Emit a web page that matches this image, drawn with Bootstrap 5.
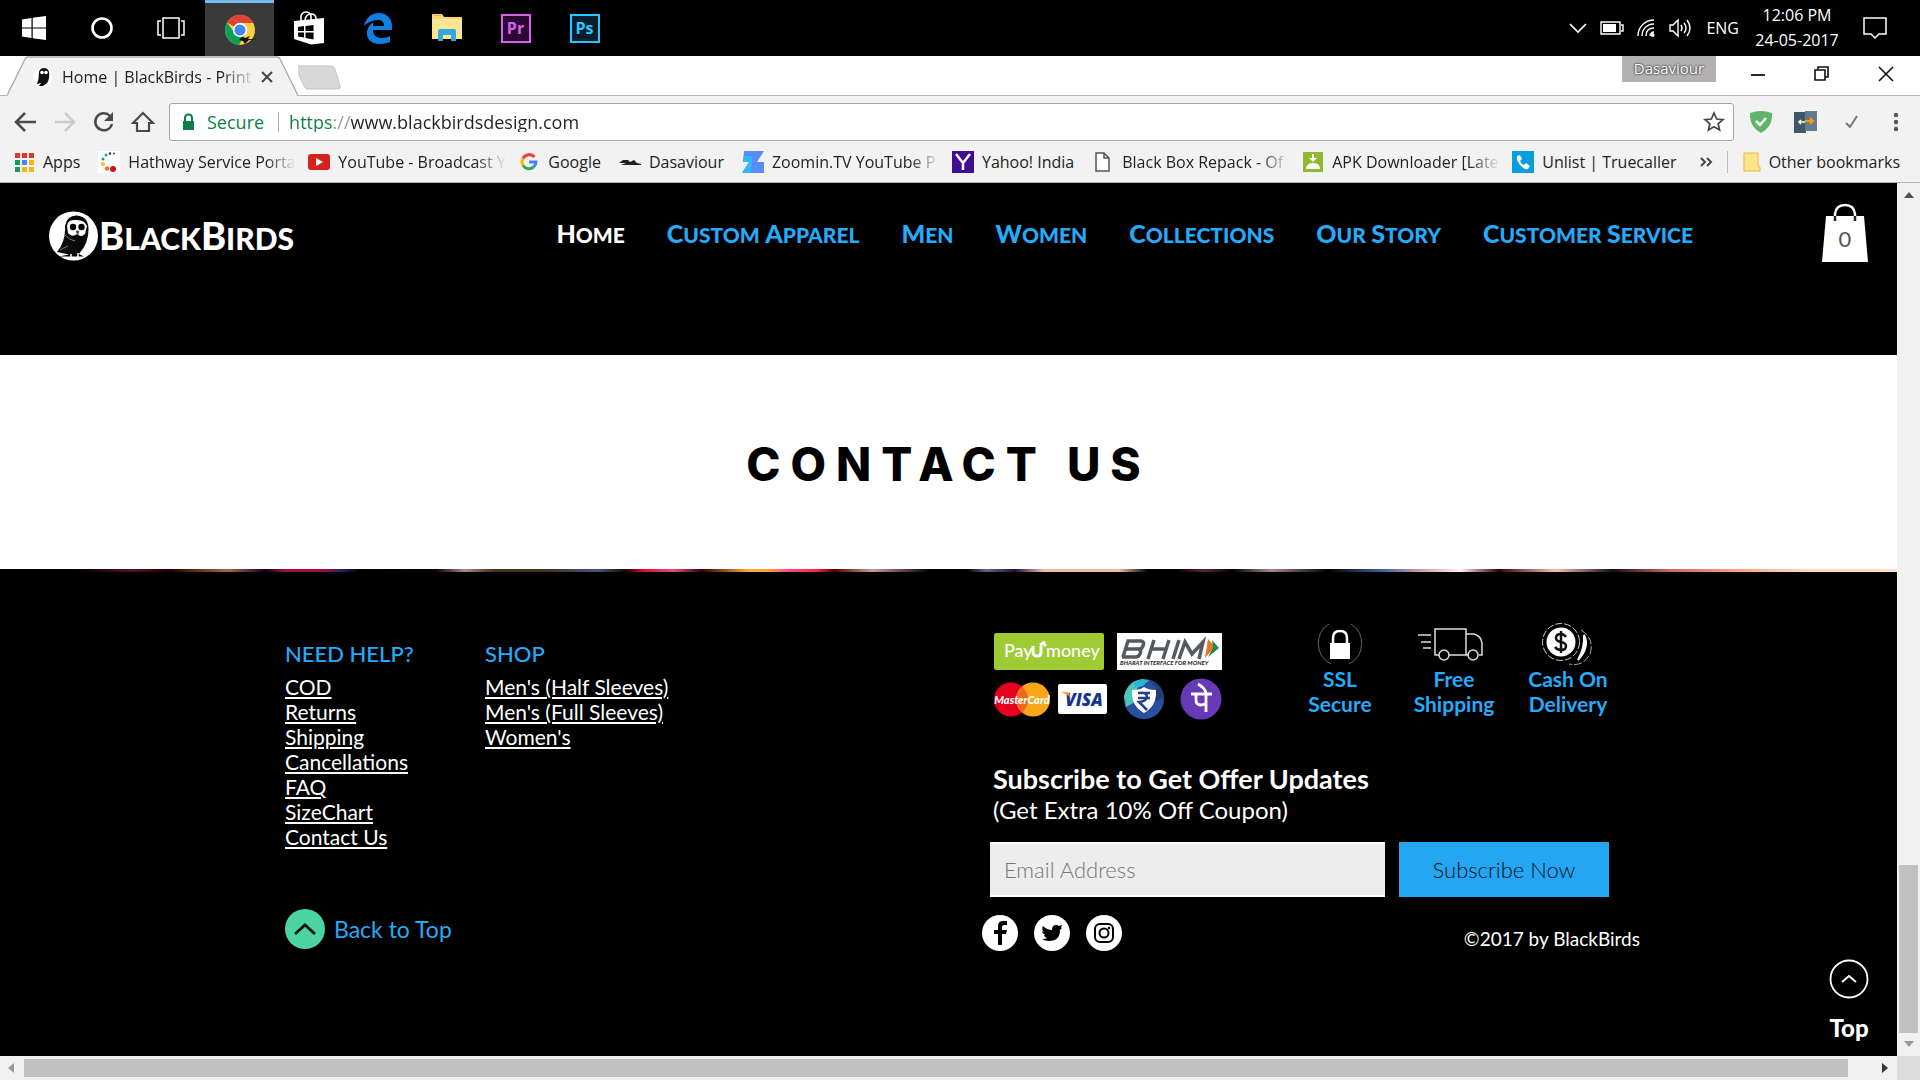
<!DOCTYPE html>
<html lang="en">
<head>
<meta charset="utf-8">
<meta name="viewport" content="width=device-width, initial-scale=1">
<title>Home | BlackBirds - Print</title>
<link rel="stylesheet" href="https://cdn.jsdelivr.net/npm/bootstrap@5.3.0/dist/css/bootstrap.min.css">
<style>
  :root { --sky: #24abfb; --chrome: #f2f2f2; }
  body { font-family: "Open Sans", "Noto Sans", sans-serif; font-size: 16px; line-height: 20px; color: #222; background: #000; }
  svg { display: block; flex: none; }
  button { border: 0; padding: 0; background: none; color: inherit; }

  /* taskbar */
  .taskbar { height: 56px; background: #000; color: #fff; }
  .task-tile { width: 69px; height: 56px; display: flex; align-items: center; justify-content: center; }
  .task-tile:first-child { width: 67px; }
  .task-tile.is-open { background: #3a3a3a; border-top: 3px solid #76b9ed; }
  .adobe { width: 30px; height: 29px; border: 2px solid; font: 700 16px/24px "Open Sans", sans-serif; text-align: center; }
  .adobe-pr { color: #d663e8; background: #2a0634; }
  .adobe-ps { color: #26c9ff; background: #0a1d2c; }
  .tray { gap: 12px; padding-right: 33px; }
  .tray-clock { line-height: 25px; text-align: center; width: 92px; }
  .tray-clock + button { margin-left: 8px; }

  /* browser frame */
  .tabstrip { height: 40px; background: #fff; border-bottom: 1px solid #b4b4b4; }
  .tab-active { width: 291px; height: 40px; margin-left: 7px; position: relative; }
  .tab-shape { position: absolute; left: 0; top: 0; }
  .tab-body { position: relative; padding: 2px 0 0 26px; height: 40px; }
  .tab-title { width: 194px; margin-left: 9px; }
  .fade-out { overflow: hidden; white-space: nowrap; -webkit-mask-image: linear-gradient(90deg, #000 82%, transparent); mask-image: linear-gradient(90deg, #000 82%, transparent); }
  .profile-tag { align-self: flex-start; width: 94px; height: 26px; background: #b1b1b1; color: #fff; font-size: 15px; line-height: 24px; text-shadow: 0 0 2px #333, 0 0 2px #333; text-align: center; margin-right: 10px; }
  .win-btn { width: 64px; height: 36px; display: flex; align-items: center; justify-content: center; }
  .win-btn:last-child { margin-right: 2px; }
  .toolbar { background: var(--chrome); padding: 7px 14px; }
  .nav-icons { gap: 16px; width: 155px; }
  .omnibox { height: 38px; background: #fff; border: 1px solid #a6a6a6; border-radius: 3px; padding: 0 8px 0 12px; font-size: 18px; }
  .secure { color: #0b8043; padding: 0 14px 0 12px; border-right: 1px solid #aaa; }
  .omnibox input { border: 0; outline: 0; padding: 0 0 0 10px; min-width: 0; color: #222;
    background: linear-gradient(90deg, #0b8043 55px, #999 55px, #999 72px, #222 72px); background-clip: text; -webkit-background-clip: text; -webkit-text-fill-color: transparent; }
  .extensions { gap: 22px; padding-left: 16px; }
  .bookmarks { background: var(--chrome); height: 35px; padding: 0 20px 6px 13px; border-bottom: 1px solid #b4b4b4; }
  .bookmarks a { color: #222; text-decoration: none; display: flex; align-items: center; gap: 8px; white-space: nowrap; }
  .bookmark-list { gap: 18px; }
  .bookmark-list .fade-out { width: 168px; margin-right: -6px; }
  .other-marks { border-left: 1px solid #bbb; padding-left: 15px; margin-left: 14px; height: 22px; }

  /* scroll bars of the viewport */
  .vbar { width: 23px; background: #f1f1f1; padding: 9px 2px; }
  .vbar i { display: block; width: 19px; height: 168px; background: #c1c1c1; margin-bottom: 8px; }
  .hbar { flex: none; height: 24px; background: #f1f1f1; padding-left: 8px; }
  .hbar i { height: 18px; background: #c1c1c1; margin: 0 34px 0 10px; }
  .hbar b { width: 23px; height: 24px; background: #dcdcdc; margin-left: 9px; }

  /* site */
  .site { font-family: Lato, "Open Sans", sans-serif; background: #000; position: relative; }
  .site-head { height: 172px; padding: 20px 29px 0 49px; }
  .caps { display: inline-block; text-transform: uppercase; font-weight: 900; }
  .brand-name { font-size: 30px; line-height: 40px; color: #fff; }
  .brand-name .caps::first-letter { font-size: 38px; }
  .site-nav { gap: 42px; margin-right: 129px; }
  .site-nav a { color: var(--sky); text-decoration: none; font-size: 21px; line-height: 28px; }
  .site-nav .caps::first-letter { font-size: 25px; }
  .site-nav a.active { color: #fff; }
  .bag { position: relative; color: #555; }
  .bag-count { position: absolute; left: 0; right: 0; top: 26px; text-align: center; font-size: 22px; }
  .contact-band { background: #fff; height: 214px; }
  .contact-band h1 { font-family: Inter, Lato, sans-serif; font-size: 46px; font-weight: 800; letter-spacing: 10px; color: #000; line-height: 58px; padding-top: 4px; }
  .photo-edge { height: 3px; background: linear-gradient(90deg, #000 0, #000 4%, #512 7%, #200 9%, #a64 12%, #102 14%, #a0103f 15%, #a0103f 17%, #226 18%, #000 19%, #100 23%, #a88 24.5%, #432 26%, #432 29%, #458 31.5%, #200 33%, #e01030 34%, #e05080 35.5%, #300 37%, #fa4 39.5%, #ff9f40 40.5%, #ff4f80 41.5%, #ff2050 43%, #500 44%, #c99 46%, #000 49%, #000 51%, #668 52%, #213 53.5%, #f0b8a8 55%, #f0b8a8 59%, #000 60.5%, #000 62%, #602040 63.5%, #000 65%, #a88 67%, #000 70%, #46a 73%, #d9a0a0 75%, #fff0ee 77%, #300 79%, #fbb 82%, #111 85%, #c66 88%, #fa8 92%, #ffd9b0 95%, #fdc 100%); }

  .site-foot { padding: 50px 257px 100px 285px; color: #fff; }
  .foot-left { padding-top: 19px; }
  .foot-title { font-size: 22px; line-height: 26px; font-weight: 500; color: var(--sky); margin: 0 0 7px; }
  .foot-links a { color: #fff; font-size: 21px; line-height: 25px; text-decoration: underline; }
  .help-col { width: 200px; }
  .foot-right { width: 650px; }
  .pay-grid { width: 232px; padding: 11px 0 0 4px; }
  .wallets { gap: 16px; padding-left: 17px; }
  .perk { width: 114px; text-align: center; color: var(--sky); font-weight: 700; font-size: 21px; line-height: 25px; }
  .perk svg { margin: 0 auto; }
  .perks { margin-right: 15px; }
  .offer { margin: 43px 0 0 3px; line-height: 31px; font-size: 24px; }
  .offer strong { font-size: 27px; display: block; }
  .mail-form { gap: 14px; margin-top: 17px; width: 619px; font-size: 22px; font-weight: 300; }
  .mail-form input { background: #ededed; border: 2px solid #fff; border-width: 2px 0; border-radius: 0; height: 55px; padding: 0 14px; min-width: 0; font-weight: 300; }
  .mail-form input::placeholder { color: #777; }
  .mail-form button { background: #24a6f2; color: #012; width: 210px; height: 55px; font-weight: 300; }
  .social { gap: 16px; margin: 18px 0 0 -8px; }
  .copyright { font-size: 19px; margin-top: 32px; }
  .back-top { color: var(--sky); font-size: 23px; text-decoration: none; gap: 9px; margin-top: 60px; }
  .float-top { position: absolute; right: 28px; bottom: 14px; color: #fff; text-decoration: none; font-weight: 900; font-size: 24px; line-height: 28px; text-align: center; }
  .float-top svg { margin: 0 auto 15px; }
</style>
<script src="https://cdn.jsdelivr.net/npm/bootstrap@5.3.0/dist/js/bootstrap.bundle.min.js"></script>
</head>
<body class="d-flex flex-column min-vh-100">

<div class="taskbar d-flex justify-content-between">
  <div class="d-flex">
    <button class="task-tile" aria-label="Start"><svg width="24" height="24" viewBox="0 0 24 24" fill="#fff"><path d="M0 3.500 9.500 2v9.500H0zM10.700 1.800 24 0v11.500H10.700zM0 12.600h9.500V22L0 20.600zM10.700 12.600H24V24l-13.300-1.800z"/></svg></button>
    <button class="task-tile" aria-label="Cortana"><svg width="24" height="24" viewBox="0 0 24 24"><circle cx="12" cy="12" r="9.500" fill="none" stroke="#fff" stroke-width="2.600"/></svg></button>
    <button class="task-tile" aria-label="Task view"><svg width="28" height="22" viewBox="0 0 28 22" fill="none" stroke="#fff" stroke-width="1.500"><path d="M6 1h16v20H6zM4 4H1v14h3M24 4h3v14h-3"/></svg></button>
    <button class="task-tile is-open" aria-label="Chrome"><svg width="34" height="32" viewBox="0 0 34 32"><circle cx="17" cy="16" r="15" fill="#ffcd40"/><path d="M17 16 4 8.500A15 15 0 0 1 30.500 9H17z" fill="#db4437"/><path d="M4 8.500A15 15 0 0 0 16 31l6-11-5-4-6 2z" fill="#0f9d58"/><circle cx="17" cy="16" r="7.200" fill="#fff"/><circle cx="17" cy="16" r="5.600" fill="#4285f4"/><path d="M16 26q3-5 6-2l5-2-2 3h9l-8 1-4 4-2-3z" fill="#111"/></svg></button>
    <button class="task-tile" aria-label="Store"><svg width="32" height="34" viewBox="0 0 32 34"><path d="M1 10 31 7v25l-13 1.500L1 28z" fill="#fff"/><path d="M8 10V5q1-4 5-4t5 4v4M12 9q1-6 6-6t5 5" fill="none" stroke="#fff" stroke-width="1.600"/><path d="M5 16l6-1v5H5zM12.500 15l8-1v6h-8zM5 21.500h6v5l-6-1zM12.500 21.500h8v7l-8-1.500z" fill="#000"/></svg></button>
    <button class="task-tile" aria-label="Edge"><svg width="30" height="32" viewBox="0 0 30 32"><path d="M1 14C3 5 9 1 16 1c8 0 13 6 13 13v4H10c0 6 4 8 9 8 3 0 6-1 8-2v6c-3 1-6 2-10 2C8 32 3 27 4 19c1-4 3-7 7-9-1 1-1 2-1 4h11c0-4-2-6-6-6C9 8 4 11 1 14z" fill="#0f7fe0"/></svg></button>
    <button class="task-tile" aria-label="File Explorer"><svg width="32" height="28" viewBox="0 0 32 28"><path d="M1 1q0-1 1-1h9l2 3h18v22H1z" fill="#f8d775"/><path d="M1 5h30v20H1z" fill="#fde592"/><path d="M7 27V17q0-2 2-2h14q2 0 2 2v10h-5v-6h-8v6z" fill="#35a7e0"/><path d="M3 1.500h7" stroke="#e5b13a"/></svg></button>
    <button class="task-tile" aria-label="Premiere Pro"><span class="adobe adobe-pr">Pr</span></button>
    <button class="task-tile" aria-label="Photoshop"><span class="adobe adobe-ps">Ps</span></button>
  </div>
  <div class="tray d-flex align-items-center">
    <button aria-label="Show hidden icons"><svg width="20" height="12" viewBox="0 0 20 12"><path d="M2 2l8 8 8-8" fill="none" stroke="#fff" stroke-width="1.700"/></svg></button>
    <svg width="24" height="14" viewBox="0 0 24 14"><path d="M1 1h19v12H1zM21 4h2v6h-2" fill="none" stroke="#fff" stroke-width="1.400"/><path d="M3 3h13v8H3z" fill="#fff"/></svg>
    <svg width="20" height="20" viewBox="0 0 20 20" fill="none" stroke="#fff" stroke-width="1.400"><path d="M2 18C2 9 9 2 18 2M6 18C6 11 11 6 18 6M10 18c0-5 3-8 8-8" /><path d="M14 18c0-2 2-4 4-4"/><circle cx="16.500" cy="17" r="2" fill="#fff" stroke="none"/></svg>
    <svg width="26" height="20" viewBox="0 0 26 20" fill="none" stroke="#fff" stroke-width="1.400"><path d="M2 7h3l5-5v16l-5-5H2zM13 7q2 3 0 6M16 5q4 5 0 10M19 2q6 8 0 16"/></svg>
    <span>ENG</span>
    <div class="tray-clock">12:06 PM<br>24-05-2017</div>
    <button aria-label="Notifications"><svg width="24" height="24" viewBox="0 0 24 24"><path d="M1 2h22v16h-7l-4 4-4-4H1z" fill="none" stroke="#fff" stroke-width="1.500"/></svg></button>
  </div>
</div>

<div class="tabstrip d-flex align-items-center">
  <div class="tab-active">
    <svg class="tab-shape" width="291" height="40" viewBox="0 0 291 40"><path d="M0 40 18 3Q19 1 21 1H270Q272 1 273 3L291 40z" fill="#f2f2f2"/><path d="M0 39.500 18 3Q19 1 21 1H270Q272 1 273 3L291 39.500" fill="none" stroke="#aaa" stroke-width="1.400"/></svg>
    <div class="tab-body d-flex align-items-center">
      <svg width="20" height="20" viewBox="0 0 20 20"><circle cx="10" cy="10" r="9.500" fill="#fff"/><path d="M6 5q1-4 5-4t5 4q1 7-2 11l-4 3H6l2-3-4 1q2-5 2-12z" fill="#111"/><circle cx="9" cy="5.500" r="1.800" fill="#fff"/><circle cx="13" cy="5.500" r="1.800" fill="#fff"/></svg>
      <span class="tab-title fade-out">Home | BlackBirds - Print</span>
      <button class="ps-1" aria-label="Close tab"><svg width="14" height="14" viewBox="0 0 14 14"><path d="M2 2l10 10M12 2 2 12" stroke="#444" stroke-width="2"/></svg></button>
    </div>
  </div>
  <button class="pt-1" aria-label="New tab"><svg width="46" height="26" viewBox="0 0 46 26"><path d="M0 1h36q3 0 4 3l5 17q1 3-2 3H13q-3 0-4-3L1 4z" transform="translate(-3 0)" fill="#d8d8d8" stroke="#c4c4c4"/></svg></button>
  <div class="ms-auto d-flex align-items-center align-self-start">
    <span class="profile-tag">Dasaviour</span>
    <button class="win-btn" aria-label="Minimize"><svg width="16" height="16"><path d="M1 9h14" stroke="#111" stroke-width="1.800"/></svg></button>
    <button class="win-btn" aria-label="Restore"><svg width="16" height="16" fill="none" stroke="#111" stroke-width="1.600"><path d="M1 4h10v10H1zM4 4V1h10v10h-3"/></svg></button>
    <button class="win-btn" aria-label="Close"><svg width="16" height="16"><path d="M1 1l14 14M15 1 1 15" stroke="#111" stroke-width="1.600"/></svg></button>
  </div>
</div>

<div class="toolbar d-flex align-items-center">
  <div class="nav-icons d-flex align-items-center">
    <button aria-label="Back"><svg width="23" height="20" viewBox="0 0 23 20" fill="none" stroke="#4a4a4a" stroke-width="2.500"><path d="M22 10H3M11 1 2 10l9 9"/></svg></button>
    <button aria-label="Forward"><svg width="23" height="20" viewBox="0 0 23 20" fill="none" stroke="#ccc" stroke-width="2.500"><path d="M2 10h18M12 1l9 9-9 9"/></svg></button>
    <button aria-label="Reload"><svg width="23" height="22" viewBox="0 0 23 22"><path d="M18 5A8.500 8.500 0 1 0 20 13" fill="none" stroke="#4a4a4a" stroke-width="2.500"/><path d="M21 1v9h-9z" fill="#4a4a4a"/></svg></button>
    <button aria-label="Home"><svg width="24" height="22" viewBox="0 0 24 22"><path d="M2 12 12 2l10 10h-4v8H6v-8z" fill="none" stroke="#4a4a4a" stroke-width="2.200"/></svg></button>
  </div>
  <div class="omnibox d-flex align-items-center flex-grow-1">
    <svg width="13" height="18" viewBox="0 0 13 18"><path d="M1 8h11v9H1z" fill="#0b8043"/><path d="M3 8V5q0-3.500 3.500-3.500T10 5v3" fill="none" stroke="#0b8043" stroke-width="2"/></svg>
    <label class="secure" for="url">Secure</label>
    <input id="url" class="flex-grow-1" type="text" value="https://www.blackbirdsdesign.com">
    <button aria-label="Bookmark this page"><svg width="22" height="22" viewBox="0 0 22 22"><path d="M11 2l2.600 6 6.400.600-4.900 4.200L16.600 19 11 15.700 5.400 19l1.500-6.200L2 8.600 8.400 8z" fill="none" stroke="#444" stroke-width="1.700"/></svg></button>
  </div>
  <div class="extensions d-flex align-items-center">
    <svg width="22" height="22" viewBox="0 0 22 22"><path d="M0 2Q11-2 22 2q1 14-11 20Q-1 16 0 2z" fill="#5fb66b"/><path d="M6 10l4 4 6-7" fill="none" stroke="#fff" stroke-width="2.500"/></svg>
    <svg width="24" height="22" viewBox="0 0 24 22"><path d="M0 1h12v21H0z" fill="#3f5866"/><path d="M11 0h12v20H11z" fill="#637c8b"/><path d="M5 11h6M7 9l-2 2 2 2" stroke="#fff" stroke-width="1.600" fill="none"/><path d="M11 10h8M16 7l3 3-3 3" stroke="#ff9800" stroke-width="2" fill="none"/></svg>
    <svg width="24" height="16" viewBox="0 0 24 16"><path d="M6 9l4 4 7-11" fill="none" stroke="#777" stroke-width="2"/></svg>
    <button aria-label="Menu"><svg width="20" height="20" viewBox="0 0 20 20" fill="#555"><circle cx="10" cy="3" r="2.200"/><circle cx="10" cy="10" r="2.200"/><circle cx="10" cy="17" r="2.200"/></svg></button>
  </div>
</div>

<div class="bookmarks d-flex align-items-center justify-content-between">
  <div class="bookmark-list d-flex align-items-center">
    <a href="#"><svg width="22" height="20" viewBox="0 0 22 20"><path d="M2 1h5v5H2zM9 1h5v5H9zM16 1h5v5h-5z" fill="#e53526"/><path d="M2 8h5v5H2z" fill="#0f9d58"/><path d="M9 8h5v5H9z" fill="#4285f4"/><path d="M16 8h5v5h-5zM9 15h5v5H9zM16 15h5v5h-5z" fill="#fbb516"/><path d="M2 15h5v5H2z" fill="#0f9d58"/></svg>Apps</a>
    <a href="#"><svg width="22" height="22" viewBox="0 0 22 22"><path fill="#fff" d="M0 0h22v22H0z"/><circle cx="16" cy="2.500" r="1" fill="#447"/><circle cx="12" cy="2.500" r="1.300" fill="#237"/><circle cx="8" cy="4" r="1.500" fill="#2a6"/><circle cx="5" cy="8" r="1.500" fill="#299"/><circle cx="5" cy="13" r="2" fill="#fb2"/><circle cx="9" cy="17.500" r="2.300" fill="#e73"/><circle cx="15" cy="18" r="3" fill="#c11"/></svg><span class="fade-out">Hathway Service Porta</span></a>
    <a href="#"><svg width="22" height="16" viewBox="0 0 22 16"><rect width="22" height="16" rx="3" fill="#d8201f"/><path d="M8 4l7 4-7 4z" fill="#fff"/></svg><span class="fade-out">YouTube - Broadcast Y</span></a>
    <a href="#"><svg width="22" height="20" viewBox="0 0 22 20" fill="none" stroke-width="3"><path d="M16.500 5A7 7 0 0 0 5 6.500" stroke="#ea4335"/><path d="M5 6.500a7 7 0 0 0 0 7" stroke="#fbbc05"/><path d="M5 13.500A7 7 0 0 0 15.500 15" stroke="#34a853"/><path d="M15.500 15q2.500-2 2.500-5h-7" stroke="#4285f4"/></svg>Google</a>
    <a href="#"><svg width="22" height="8" viewBox="0 0 22 8"><path d="M0 5 4 2h5l2 2 4-2 3 3 4 1v1H2L7 5z" fill="#222"/></svg>Dasaviour</a>
    <a href="#"><svg width="22" height="22" viewBox="0 0 22 22"><path d="M2 0h20l-7 11h7v11H0l7-11H1z" fill="#5a8cf5"/><path d="M0 22 7 11H1l1-6 8 0-1 17z" fill="#33b8f5"/></svg><span class="fade-out">Zoomin.TV YouTube P</span></a>
    <a href="#"><svg width="22" height="22" viewBox="0 0 22 22"><path fill="#3f0f92" d="M0 0h22v22H0z"/><path d="M4 3l7 9 7-9M11 12v7" stroke="#fff" stroke-width="2.500" fill="none"/></svg>Yahoo! India</a>
    <a href="#"><svg width="22" height="20" viewBox="0 0 22 20"><path d="M4 1h8l5 5v13H4zM12 1v5h5" fill="#fff" stroke="#555" stroke-width="1.500"/></svg><span class="fade-out">Black Box Repack - Of</span></a>
    <a href="#"><svg width="22" height="20" viewBox="0 0 22 20"><path fill="#8fb92f" d="M1 0h20v20H1z"/><path d="M4 17q0-6 7-6t7 6zM10 2h2v4h3l-4 4-4-4h3z" fill="#fff"/></svg><span class="fade-out">APK Downloader [Late</span></a>
    <a href="#"><svg width="22" height="22" viewBox="0 0 22 22"><path fill="#0a9ddc" d="M0 0h22v22H0z"/><path d="M5 5l3-1 2 4-2 2q1 3 4 4l2-2 4 3-2 3q-4 1-8-4T5 5z" fill="#fff"/></svg>Unlist | Truecaller</a>
  </div>
  <div class="d-flex align-items-center">
    <button aria-label="More bookmarks"><svg width="14" height="12" viewBox="0 0 14 12" fill="none" stroke="#444" stroke-width="2"><path d="M2 2l4 4-4 4M8 2l4 4-4 4"/></svg></button>
    <a href="#" class="other-marks"><svg width="18" height="20" viewBox="0 0 18 20"><path d="M1 1h14v13l2 1v4H1z" fill="#ffe38a" stroke="#e8bd3f"/></svg>Other bookmarks</a>
  </div>
</div>

<div class="d-flex flex-grow-1">
  <main class="site flex-grow-1" id="top">
    <header class="site-head d-flex align-items-start justify-content-between">
      <a href="#top" class="d-flex align-items-center text-decoration-none pt-2">
        <svg width="50" height="50" viewBox="0 0 50 50"><circle cx="24.500" cy="25" r="24.500" fill="#fff"/><path d="M16 15Q18 4 28 4.500q11 1 11.500 13Q40 32 30 43l5 2.500H10l10-2L8 41Q17 30 16 15z" fill="#0a0a0a"/><path d="M18 15q1-7 8-6 9-1 12 6l-2 8q-4 4-8 0-5 4-9-1z" fill="#fff"/><circle cx="24" cy="16" r="3.200"/><circle cx="32.500" cy="16" r="3.200"/><path d="M27 20l2 4 1-4zM16 24q4 5 10 6M11 39l8-4" stroke="#777" fill="#111"/><path d="M22 43v3M29 42v4" stroke="#fff" stroke-width="1.500"/></svg>
        <span class="brand-name"><span class="caps">Black</span><span class="caps">Birds</span></span>
      </a>
      <div class="d-flex align-items-start">
        <nav class="site-nav d-flex pt-3">
          <a href="#" class="active"><span class="caps">Home</span></a>
          <a href="#"><span class="caps">Custom</span> <span class="caps">Apparel</span></a>
          <a href="#"><span class="caps">Men</span></a>
          <a href="#"><span class="caps">Women</span></a>
          <a href="#"><span class="caps">Collections</span></a>
          <a href="#"><span class="caps">Our</span> <span class="caps">Story</span></a>
          <a href="#"><span class="caps">Customer</span> <span class="caps">Service</span></a>
        </nav>
        <a href="#" class="bag" aria-label="Cart"><svg width="46" height="60" viewBox="0 0 46 60"><path d="M4 13h38l4 46H0z" fill="#fff"/><path d="M13 17v-6q1-9 10-9t10 9v6" fill="none" stroke="#fff" stroke-width="2.500"/><path d="M13 13v5M33 13v5" stroke="#222" stroke-width="2.500"/></svg><span class="bag-count">0</span></a>
      </div>
    </header>

    <section class="contact-band d-flex align-items-center justify-content-center"><h1 class="m-0">CONTACT US</h1></section>
    <div class="photo-edge"></div>

    <footer class="site-foot d-flex justify-content-between">
      <div class="foot-left">
        <div class="d-flex">
          <div class="help-col">
            <h2 class="foot-title">NEED HELP?</h2>
            <div class="foot-links d-flex flex-column align-items-start">
              <a href="#">COD</a><a href="#">Returns</a><a href="#">Shipping</a><a href="#">Cancellations</a><a href="#">FAQ</a><a href="#">SizeChart</a><a href="#">Contact Us</a>
            </div>
          </div>
          <div>
            <h2 class="foot-title">SHOP</h2>
            <div class="foot-links d-flex flex-column align-items-start">
              <a href="#">Men's (Half Sleeves)</a><a href="#">Men's (Full Sleeves)</a><a href="#">Women's</a>
            </div>
          </div>
        </div>
        <a href="#top" class="back-top d-inline-flex align-items-center"><svg width="40" height="40" viewBox="0 0 40 40"><circle cx="20" cy="20" r="20" fill="#4cd3a2"/><path d="M10 25l10-9 10 9" fill="none" stroke="#111" stroke-width="2.800"/></svg>Back to Top</a>
      </div>

      <div class="foot-right">
        <div class="d-flex justify-content-between">
          <div class="pay-grid">
            <div class="d-flex justify-content-between mb-2">
              <svg width="110" height="37" viewBox="0 0 110 37"><rect width="110" height="37" rx="2" fill="#9fcb35"/><g fill="#fff" font-family="Lato" font-weight="500" font-size="18"><text x="10" y="24">Pay</text><text x="52" y="24">money</text></g><path d="M39 13v6q0 4 4 4t4-4v-6M46 12l5-3M48 9l4 4" stroke="#fff" stroke-width="3" fill="none"/></svg>
              <svg width="105" height="37" viewBox="0 0 105 37"><path fill="#fff" d="M0 0h105v37H0z"/><g fill="none" stroke="#555a60" stroke-width="3.500"><path d="M6 24l5-16h13q4 1 2 5-1 3-4 3H9h12q4 1 2 5-1 3-5 3H5M31 26l6-19M33 16h16M46 26l6-19M56 26l6-19M62 26l6-17 7 12 11-12-4 17"/></g><path d="M91 6l7 8-10 11z" fill="#e8742c"/><path d="M95 7l7 8-11 9 5-9z" fill="#1d8a43"/><text x="3" y="32" font-family="Lato" font-weight="900" font-style="italic" font-size="6" fill="#333">BHARAT INTERFACE FOR MONEY</text></svg>
            </div>
            <div class="d-flex align-items-center">
              <svg width="56" height="35" viewBox="0 0 56 35"><circle cx="17" cy="17.500" r="17" fill="#e5001f"/><circle cx="39" cy="17.500" r="17" fill="#f9a61c"/><path d="M28 4.500a17 17 0 0 1 0 26 17 17 0 0 1 0-26z" fill="#ee6a1d"/><text x="28" y="22" text-anchor="middle" font-family="Lato" font-weight="900" font-style="italic" font-size="11" fill="#fff">MasterCard</text></svg>
              <svg class="ms-2" width="49" height="30" viewBox="0 0 49 30"><rect width="49" height="30" rx="2" fill="#fff"/><text x="26" y="22" text-anchor="middle" font-family="Open Sans" font-weight="800" font-style="italic" font-size="17" fill="#15348c">VISA</text><path d="M3 8h7l3 6q-4-4-10-6z" fill="#f5a21d"/></svg>
              <div class="wallets d-flex">
                <svg width="40" height="42" viewBox="0 0 40 42"><circle cx="20" cy="21" r="20" fill="#2a4f9c"/><path d="M20 1Q4 2 0 18l2 11 9-5 2-13z" fill="#4cc5b5"/><path d="M10 5q6-5 15-3l-6 6-8 2z" fill="#25b6d7"/><path d="M25 2q14 4 15 18l-8 3V10z" fill="#223d7c"/><path d="M8 12q9 0 12-3 4 3 12 3 1 16-12 23Q7 28 8 12z" fill="#fff"/><path d="M14 15h12M14 20h12M15 15q8-1 8 4 0 4-8 5l8 8" stroke="#24418b" stroke-width="2.500" fill="none"/></svg>
                <svg width="42" height="42" viewBox="0 0 42 42"><circle cx="21" cy="21" r="20.500" fill="#6739b7"/><path d="M11 16h21M26 16v18M16 16v6q0 5 5 5 3 0 5-2M26 15q-1-5-8-9" stroke="#fff" stroke-width="2.800" fill="none"/></svg>
              </div>
            </div>
          </div>
          <div class="perks d-flex">
            <div class="perk"><svg width="48" height="44" viewBox="0 0 48 44"><path d="M13 2A23 23 0 0 0 15 42M33 42A23 23 0 0 0 35 2" fill="none" stroke="#666"/><path d="M14 21h20v16H14z" fill="#fff"/><path d="M17 21v-5q0-7 7-7t7 7v5" fill="none" stroke="#fff" stroke-width="2.500"/></svg>SSL<br>Secure</div>
            <div class="perk"><svg class="pe-2" width="74" height="44" viewBox="0 0 66 44" fill="none" stroke="#ddd" stroke-width="1.500"><path d="M22 33h-4V7h31v26H32M49 12h8q7 2 8 9v12h-3M49 33h3M1 13h13M4 20h10M6 26h8"/><circle cx="27" cy="33" r="5"/><circle cx="56" cy="33" r="5"/></svg>Free<br>Shipping</div>
            <div class="perk"><svg width="54" height="44" viewBox="0 0 54 44"><circle cx="20" cy="20" r="18.500" fill="none" stroke="#ccc" stroke-dasharray="7 2"/><circle cx="20" cy="20" r="14.500" fill="#fff"/><path d="M25 15q-2-3-5-3-5 0-5 4 0 3 5 4t5 4q0 4-5 4-4 0-6-3M20 9v22" fill="none" stroke="#111" stroke-width="2.500"/><path d="M43 13q6 12-6 25 7-12 6-25z" fill="#fff" stroke="#fff" stroke-width="2"/><path d="M40 8q14 9 9 24-7 13-21 10" fill="none" stroke="#aaa" stroke-dasharray="8 2"/></svg>Cash On<br>Delivery</div>
          </div>
        </div>
        <div class="offer"><strong>Subscribe to Get Offer Updates</strong>(Get Extra 10% Off Coupon)</div>
        <form class="mail-form d-flex" onsubmit="return false">
          <input class="flex-grow-1" type="email" placeholder="Email Address" aria-label="Email Address">
          <button type="submit">Subscribe Now</button>
        </form>
        <div class="d-flex justify-content-between">
          <div class="social d-flex">
            <a href="#" aria-label="Facebook"><svg width="36" height="36" viewBox="0 0 36 36"><circle cx="18" cy="18" r="18" fill="#fff"/><path d="M16 30V19h-4v-4h4v-4q0-5 5-5h4v4h-3q-2 0-2 2v3h5l-1 4h-4v11z"/></svg></a>
            <a href="#" aria-label="Twitter"><svg width="36" height="36" viewBox="0 0 36 36"><circle cx="18" cy="18" r="18" fill="#fff"/><path d="M9 11q4 4 9 4 0-5 4-5 2 0 3 1l3-1-1 3 1 0-2 2q0 11-11 11-4 0-7-2 4 0 5-1-3-1-3-3h1q-3-2-3-4l2 1q-3-3-1-6z"/></svg></a>
            <a href="#" aria-label="Instagram"><svg width="36" height="36" viewBox="0 0 36 36"><circle cx="18" cy="18" r="18" fill="#fff"/><g fill="none" stroke="#000" stroke-width="2"><rect x="9" y="9" width="18" height="18" rx="5"/><circle cx="18" cy="18" r="4.500"/></g><circle cx="23" cy="13" r="1.300"/></svg></a>
          </div>
          <span class="copyright">©2017 by BlackBirds</span>
        </div>
      </div>
    </footer>
    <a href="#top" class="float-top"><svg width="40" height="40" viewBox="0 0 40 40" fill="none" stroke="#fff" stroke-width="1.800"><circle cx="20" cy="20" r="18.500"/><path d="M13 23l7-6 7 6"/></svg>Top</a>
  </main>
  <div class="vbar d-flex flex-column align-items-center" aria-hidden="true">
    <svg width="10" height="6" viewBox="0 0 10 6"><path d="M0 6 5 0l5 6z" fill="#505050"/></svg>
    <i class="mt-auto"></i>
    <svg width="10" height="6" viewBox="0 0 10 6"><path d="M0 0l5 6 5-6z" fill="#999"/></svg>
  </div>
</div>
<div class="hbar d-flex align-items-center" aria-hidden="true">
  <svg width="6" height="10" viewBox="0 0 6 10"><path d="M6 0 0 5l6 5z" fill="#999"/></svg>
  <i class="flex-grow-1"></i>
  <svg width="6" height="10" viewBox="0 0 6 10"><path d="M0 0l6 5-6 5z" fill="#333"/></svg>
  <b></b>
</div>
</body>
</html>
